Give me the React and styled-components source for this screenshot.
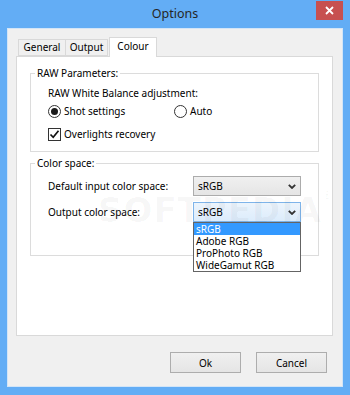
import React from 'react';
import styled, { createGlobalStyle } from 'styled-components';

const Global = createGlobalStyle`
  html, body { margin: 0; padding: 0; }
  body {
    font-family: "Segoe UI", "Noto Sans", "Open Sans", sans-serif;
    font-size: 10px;
    color: #000;
    background: #fff;
  }
  *, *::before, *::after { box-sizing: border-box; }
`;

const Window = styled.div`
  position: relative;
  width: 350px;
  height: 395px;
  background: #63adf5;
  display: flex;
  flex-direction: column;
  overflow: hidden;
`;

const TitleBar = styled.div`
  height: 28px;
  flex: none;
  display: grid;
  grid-template-columns: 1fr auto 1fr;
  align-items: start;
  padding: 0 7px;
`;

const Title = styled.div`
  grid-column: 2;
  font-size: 12.5px;
  line-height: 28px;
  color: #262626;
`;

const CloseBtn = styled.div`
  grid-column: 3;
  justify-self: end;
  width: 27px;
  height: 19px;
  margin-top: 1px;
  background: #c75050;
  display: flex;
  align-items: center;
  justify-content: center;
`;

const Client = styled.div`
  flex: none;
  height: 359px;
  margin: 0 7px;
  background: #f0f0f0;
  border: 1px solid #d3e5f7;
  display: flex;
  flex-direction: column;
  padding: 8px 9px 0 8px;
`;

const TabStrip = styled.div`
  display: flex;
  align-items: flex-end;
  height: 19px;
  padding-left: 2px;
`;

const Tab = styled.div`
  position: relative;
  width: ${p => p.$w}px;
  height: ${p => (p.$active ? 20 : 17)}px;
  margin-left: ${p => p.$ml || 0}px;
  margin-bottom: ${p => (p.$active ? -1 : 0)}px;
  z-index: ${p => (p.$active ? 2 : 1)};
  background: ${p => (p.$active ? '#fff' : '#f0f0f0')};
  border: 1px solid #d9d9d9;
  border-bottom: ${p => (p.$active ? 'none' : '1px solid #d9d9d9')};
  display: flex;
  align-items: ${p => (p.$active ? 'flex-start' : 'center')};
  justify-content: center;
  line-height: 15px;
  padding-top: ${p => (p.$active ? 1 : 0)}px;
  color: #000;
`;

const Panel = styled.div`
  height: 280px;
  flex: none;
  background: #fff;
  border: 1px solid #d9d9d9;
  padding: 0 13px;
  display: flex;
  flex-direction: column;
`;

const Group = styled.fieldset`
  margin: ${p => p.$mt}px 0 0;
  padding: 0;
  border: 1px solid #dcdcdc;
  min-inline-size: 0;
`;

const Legend = styled.legend`
  margin-left: 4px;
  padding: 0 2px;
  line-height: 16px;
  color: #000;
`;

const GroupBody = styled.div`
  display: flex;
  flex-direction: column;
  padding: ${p => p.$pad};
`;

const Line = styled.div`
  line-height: 16px;
  height: 16px;
`;

const OptionRow = styled.div`
  display: grid;
  grid-template-columns: 126px auto;
  align-items: center;
  height: 20px;
  margin-top: ${p => p.$mt || 0}px;
`;

const Choice = styled.label`
  display: flex;
  align-items: center;
  gap: 3px;
  line-height: 16px;
`;

const RadioCircle = styled.span`
  flex: none;
  width: 13px;
  height: 13px;
  border-radius: 50%;
  border: 1px solid #333;
  background: #fff;
  display: flex;
  align-items: center;
  justify-content: center;
  &::after {
    content: '';
    display: ${p => (p.$on ? 'block' : 'none')};
    width: 7px;
    height: 7px;
    border-radius: 50%;
    background: #1a1a1a;
  }
`;

const CheckBox = styled.span`
  flex: none;
  width: 13px;
  height: 13px;
  border: 1px solid #333;
  background: #fff;
  display: flex;
  align-items: center;
  justify-content: center;
`;

const FieldRow = styled.div`
  display: grid;
  grid-template-columns: 145px 108px;
  align-items: center;
  height: 20px;
  margin-top: ${p => p.$mt || 0}px;
`;

const SelectWrap = styled.div`
  position: relative;
  height: 20px;
`;

const SelectBox = styled.div`
  height: 20px;
  border: 1px solid ${p => (p.$focus ? '#7eb4ea' : '#acacac')};
  background: ${p =>
    p.$focus
      ? 'linear-gradient(#ecf4fc, #dcecfc)'
      : 'linear-gradient(#f0f0f0, #e5e5e5)'};
  display: flex;
  align-items: center;
  justify-content: space-between;
  padding: 0 4px 0 4px;
  line-height: 16px;
`;

const DropList = styled.ul`
  position: absolute;
  left: 0;
  right: 0;
  top: 20px;
  margin: 0;
  padding: 0;
  list-style: none;
  background: #fff;
  border: 1px solid #646464;
  z-index: 5;
`;

const DropItem = styled.li`
  height: 12px;
  line-height: 12px;
  padding-left: 2px;
  background: ${p => (p.$sel ? '#3399ff' : 'transparent')};
  color: ${p => (p.$sel ? '#fff' : '#000')};
  white-space: nowrap;
`;

const Footer = styled.div`
  display: flex;
  justify-content: flex-end;
  gap: 15px;
  margin-top: 16px;
  padding-right: 6px;
`;

const Button = styled.button`
  width: 71px;
  height: 21px;
  border: 1px solid #adadad;
  background: linear-gradient(#f0f0f0, #e5e5e5);
  font-family: inherit;
  font-size: 10px;
  color: #000;
  padding: 0;
  line-height: 16px;
`;

const Watermark = styled.div`
  position: absolute;
  left: 98px;
  top: 190px;
  font-family: "DejaVu Sans", sans-serif;
  font-weight: bold;
  font-size: 34px;
  letter-spacing: 1px;
  color: rgba(0, 0, 0, 0.035);
  pointer-events: none;
  z-index: 3;
  sup {
    font-size: 10px;
    vertical-align: top;
  }
`;

const Chevron = () => (
  <svg width="8" height="5" viewBox="0 0 8 5">
    <path d="M0.8 0.8 L4 4 L7.2 0.8" fill="none" stroke="#333" strokeWidth="1.8" />
  </svg>
);

export default function App() {
  return (
    <>
      <Global />
      <Window>
        <TitleBar>
          <Title>Options</Title>
          <CloseBtn>
            <svg width="9" height="9" viewBox="0 0 9 9">
              <path d="M1 1 L8 8 M8 1 L1 8" stroke="#fff" strokeWidth="1.8" />
            </svg>
          </CloseBtn>
        </TitleBar>
        <Client>
          <TabStrip>
            <Tab $w={48}>General</Tab>
            <Tab $w={43} $ml={-1}>Output</Tab>
            <Tab $w={48} $ml={1} $active>Colour</Tab>
          </TabStrip>
          <Panel>
            <Group $mt={8}>
              <Legend>RAW Parameters:</Legend>
              <GroupBody $pad="4px 0 7px 17px">
                <Line>RAW White Balance adjustment:</Line>
                <OptionRow>
                  <Choice><RadioCircle $on />Shot settings</Choice>
                  <Choice><RadioCircle />Auto</Choice>
                </OptionRow>
                <OptionRow $mt={3}>
                  <Choice>
                    <CheckBox>
                      <svg width="11" height="11" viewBox="0 0 11 11">
                        <path d="M1.5 5.5 L4.2 8.3 L9.5 1.8" fill="none" stroke="#111" strokeWidth="1.7" />
                      </svg>
                    </CheckBox>
                    Overlights recovery
                  </Choice>
                </OptionRow>
              </GroupBody>
            </Group>
            <Group $mt={3}>
              <Legend>Color space:</Legend>
              <GroupBody $pad="5px 0 33px 17px">
                <FieldRow>
                  <span>Default input color space:</span>
                  <SelectWrap>
                    <SelectBox>sRGB<Chevron /></SelectBox>
                  </SelectWrap>
                </FieldRow>
                <FieldRow $mt={6}>
                  <span>Output color space:</span>
                  <SelectWrap>
                    <SelectBox $focus>sRGB<Chevron /></SelectBox>
                    <DropList>
                      <DropItem $sel>sRGB</DropItem>
                      <DropItem>Adobe RGB</DropItem>
                      <DropItem>ProPhoto RGB</DropItem>
                      <DropItem>WideGamut RGB</DropItem>
                    </DropList>
                  </SelectWrap>
                </FieldRow>
              </GroupBody>
            </Group>
          </Panel>
          <Footer>
            <Button>Ok</Button>
            <Button>Cancel</Button>
          </Footer>
        </Client>
        <Watermark>SOFTPEDIA<sup>®</sup></Watermark>
      </Window>
    </>
  );
}
